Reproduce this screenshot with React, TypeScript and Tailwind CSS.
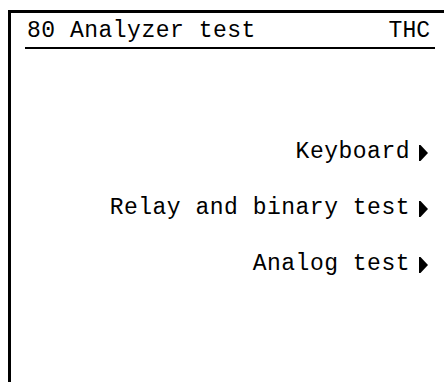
const items = ["Keyboard", "Relay and binary test", "Analog test"];

function Arrow() {
  return (
    <svg width="9" height="16" viewBox="0 0 9 16" className="mt-[1px] shrink-0">
      <path d="M0 0 L1.5 0 L9 8 L1.5 16 L0 16 Z" fill="#000" />
    </svg>
  );
}

export default function App() {
  return (
    <div
      className="h-[382px] w-[444px] overflow-hidden bg-white pl-[8px] pt-[10px] text-black"
      style={{ fontFamily: '"Liberation Mono", "DejaVu Sans Mono", monospace' }}
    >
      <div className="flex h-full flex-col border-l-[3px] border-t-[3px] border-black">
        <div className="ml-[14px] mr-[9px] mt-[5px] flex items-end justify-between border-b-2 border-black pb-[3px] pl-[2px] pr-[5px] text-[23px] leading-[26px]">
          <span className="tracking-[0.5px]">80 Analyzer test</span>
          <span>THC</span>
        </div>
        <div className="mt-[90px] flex flex-col items-end gap-[30px] pr-[16px] text-[23px] leading-[26px]">
          {items.map((t) => (
            <div key={t} className="flex items-center gap-[9px]">
              <span className="tracking-[0.5px]">{t}</span>
              <Arrow />
            </div>
          ))}
        </div>
      </div>
    </div>
  );
}
